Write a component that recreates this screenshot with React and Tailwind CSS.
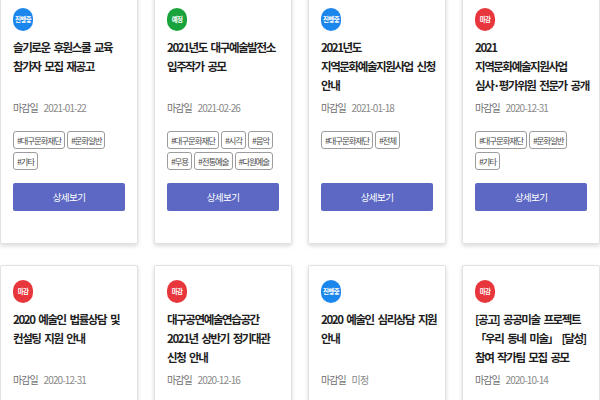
const STATUS = {
  open: { label: "진행중", cls: "bg-[#1b86ec]" },
  soon: { label: "예정", cls: "bg-[#19a33c]" },
  closed: { label: "마감", cls: "bg-[#e8373c]" },
};

const notices = [
  {
    status: "open",
    title: ["슬기로운 후원스쿨 교육", "참가자 모집 재공고"],
    due: "2021-01-22",
    tags: ["#대구문화재단", "#문화일반", "#기타"],
  },
  {
    status: "soon",
    title: ["2021년도 대구예술발전소", "입주작가 공모"],
    due: "2021-02-26",
    tags: ["#대구문화재단", "#시각", "#음악", "#무용", "#전통예술", "#다원예술"],
  },
  {
    status: "open",
    title: ["2021년도", "지역문화예술지원사업 신청", "안내"],
    due: "2021-01-18",
    tags: ["#대구문화재단", "#전체"],
  },
  {
    status: "closed",
    title: ["2021", "지역문화예술지원사업", "심사·평가위원 전문가 공개"],
    due: "2020-12-31",
    tags: ["#대구문화재단", "#문화일반", "#기타"],
  },
  {
    status: "closed",
    title: ["2020 예술인 법률상담 및", "컨설팅 지원 안내"],
    due: "2020-12-31",
    tags: ["#대구문화재단", "#전체"],
  },
  {
    status: "closed",
    title: ["대구공연예술연습공간", "2021년 상반기 정기대관", "신청 안내"],
    due: "2020-12-16",
    tags: ["#대구문화재단", "#공연"],
  },
  {
    status: "open",
    title: ["2020 예술인 심리상담 지원", "안내"],
    due: "미정",
    tags: ["#대구문화재단", "#전체"],
  },
  {
    status: "closed",
    title: ["[공고] 공공미술 프로젝트", "「우리 동네 미술」 [달성]", "참여 작가팀 모집 공모"],
    due: "2020-10-14",
    tags: ["#대구문화재단", "#시각"],
  },
];

const NoticeCard = ({ notice }) => {
  const status = STATUS[notice.status];
  return (
    <div className="h-[251px] bg-white border border-[#e2e2e2] rounded-[2px] shadow-[0_2px_4px_rgba(0,0,0,0.15)] px-[12px] pt-[14px] flex flex-col">
      <div
        className={`w-[20px] h-[23px] rounded-full ${status.cls} flex items-center justify-center text-white text-[6.5px] font-bold tracking-[-0.7px]`}
      >
        {status.label}
      </div>

      <h3 className="mt-[7px] h-[57px] text-[11.5px] leading-[19px] font-bold text-[#1e1e1e] tracking-[-1.4px] [word-spacing:2.5px] whitespace-nowrap">
        {notice.title.map((line, i) => (
          <div key={i}>{line}</div>
        ))}
      </h3>

      <div className="mt-[6px] h-[14px] flex items-center gap-[6px] leading-[14px] whitespace-nowrap">
        <span className="text-[10px] text-[#6f6f6f] tracking-[-1px]">마감일</span>
        <span className="text-[10px] text-[#8a8a8a] tracking-[-0.9px]">{notice.due}</span>
      </div>

      <div className="mt-[16px] h-[40px] flex flex-wrap content-start gap-x-[2px] gap-y-[3px]">
        {notice.tags.map((tag) => (
          <span
            key={tag}
            className="h-[18px] px-[3px] flex items-center border border-[#9c9c9c] rounded-[3px] text-[8.5px] text-[#4a4a4a] tracking-[-1.1px] whitespace-nowrap"
          >
            {tag}
          </span>
        ))}
      </div>

      <button className="mt-[12px] h-[28px] w-full rounded-[2px] bg-[#5c68c4] text-white text-[9.5px] tracking-[-0.6px]">
        상세보기
      </button>
    </div>
  );
};

export default function App() {
  return (
    <div
      className="w-[600px] h-[400px] overflow-hidden bg-white"
      style={{ fontFamily: '"Noto Sans CJK KR", "Noto Sans", sans-serif' }}
    >
      <div className="-mt-[7px] grid grid-cols-4 gap-x-[16px] gap-y-[21px]">
        {notices.map((n, i) => (
          <NoticeCard key={i} notice={n} />
        ))}
      </div>
    </div>
  );
}
